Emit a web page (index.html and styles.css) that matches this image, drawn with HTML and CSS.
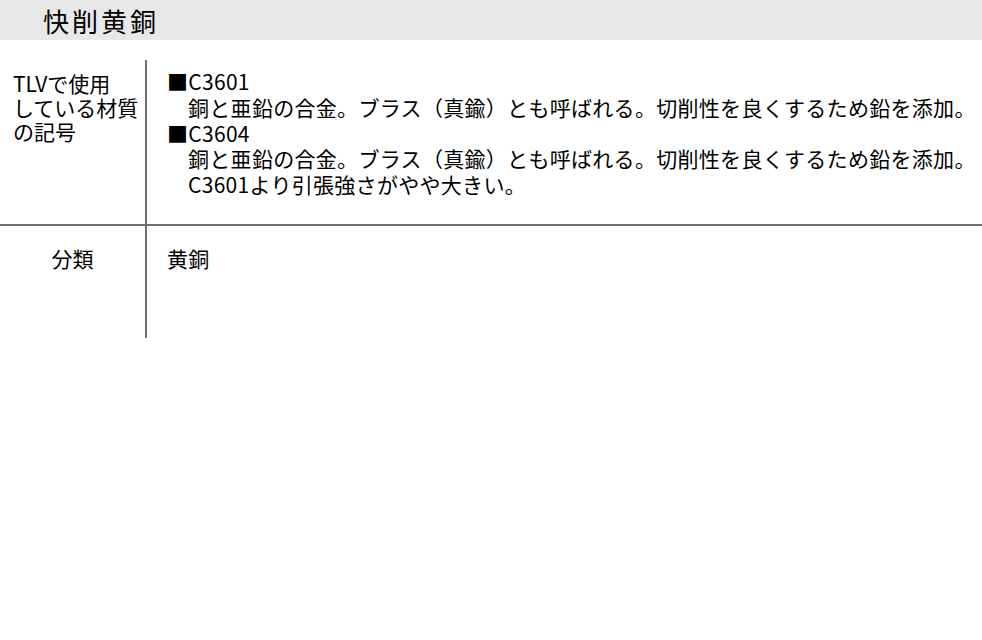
FILE: index.html
```html
<!DOCTYPE html>
<html lang="ja">
<head>
<meta charset="utf-8">
<title>快削黄銅</title>
<link rel="stylesheet" href="styles.css">
</head>
<body>
<div class="title">快削黄銅</div>
<table class="spec">
  <tr class="row-symbol">
    <th class="label label-left">TLVで使用<br>している材質<br>の記号</th>
    <td class="value">
      <div class="item">■C3601</div>
      <div class="desc">銅と亜鉛の合金。ブラス（真鍮）とも呼ばれる。切削性を良くするため鉛を添加。</div>
      <div class="item">■C3604</div>
      <div class="desc">銅と亜鉛の合金。ブラス（真鍮）とも呼ばれる。切削性を良くするため鉛を添加。<br>C3601より引張強さがやや大きい。</div>
    </td>
  </tr>
  <tr class="row-class">
    <th class="label label-center">分類</th>
    <td class="value">黄銅</td>
  </tr>
</table>
</body>
</html>
```
FILE: styles.css
```css
html, body {
  margin: 0;
  padding: 0;
  background: #ffffff;
}
body {
  font-family: "Noto Sans CJK JP", "Noto Sans", sans-serif;
  color: #000;
}
.title {
  height: 40px;
  background: #e8e8e8;
  font-size: 26px;
  line-height: 42px;
  letter-spacing: 3px;
  padding-left: 43px;
  box-sizing: border-box;
}
.spec {
  margin-top: 20px;
  width: 100%;
  border-collapse: collapse;
  border-spacing: 0;
  font-size: 21px;
  line-height: 26px;
  letter-spacing: 0.3px;
}
.spec th, .spec td {
  padding: 0;
  vertical-align: top;
  font-weight: normal;
}
.label {
  width: 146px;
  border-right: 2px solid #707070;
  box-sizing: border-box;
  letter-spacing: 0;
}
.label-left {
  text-align: left;
  line-height: 24px;
  padding-left: 13px !important;
}
.label-center {
  text-align: center;
}
.value {
  padding-left: 20px !important;
  text-align: left;
}
.row-symbol th, .row-symbol td {
  height: 165px;
  border-bottom: 2px solid #707070;
  box-sizing: border-box;
}
.row-symbol th {
  padding-top: 11px !important;
}
.row-symbol td {
  padding-top: 9px !important;
  line-height: 25.75px;
}
.row-class th, .row-class td {
  height: 113px;
  padding-top: 19px !important;
  box-sizing: border-box;
}
.desc {
  padding-left: 21px;
}
```
